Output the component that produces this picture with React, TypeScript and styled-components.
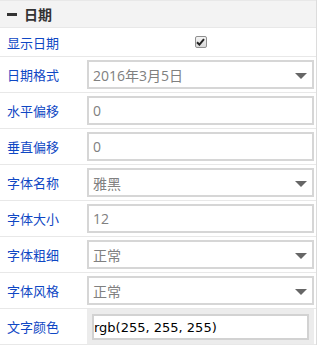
import React from "react";
import styled, { createGlobalStyle } from "styled-components";

const GlobalStyle = createGlobalStyle`
  html, body {
    margin: 0;
    padding: 0;
    background: #ffffff;
  }
  body {
    font-family: "Open Sans", "Noto Sans CJK SC", sans-serif;
  }
`;

const Panel = styled.div`
  width: 316px;
  border-right: 1px solid #dcdcdc;
  background: #fff;
`;

const Header = styled.div`
  height: 26px;
  border-top: 1px solid #e8e8e8;
  border-bottom: 1px solid #e8e8e8;
  background: #f3f3f3;
  display: flex;
  align-items: center;
  gap: 7px;
  padding-left: 7px;
  font-family: "Noto Sans CJK SC", sans-serif;
  font-size: 14px;
  font-weight: 700;
  color: #333;
`;

const Minus = styled.span`
  display: inline-block;
  width: 10px;
  height: 3px;
  background: #333;
`;

const Row = styled.div<{ $tall?: boolean }>`
  display: grid;
  grid-template-columns: 87px 227px;
  align-items: center;
  height: ${(p) => (p.$tall ? 35 : 28)}px;
  border-bottom: 1px solid #e8e8e8;
`;

const Label = styled.div`
  padding-left: 7px;
  font-family: "Noto Sans CJK SC", sans-serif;
  font-size: 13px;
  color: #0f47c4;
`;

const Field = styled.div`
  position: relative;
  box-sizing: border-box;
  height: 29px;
  border: 2px solid #d6d6d6;
  display: flex;
  align-items: center;
  padding-left: 4px;
  font-family: "Open Sans", "Noto Sans CJK SC", sans-serif;
  font-size: 14px;
  color: #808080;
`;

const Arrow = styled.span`
  position: absolute;
  right: 5px;
  top: 11px;
  width: 0;
  height: 0;
  border-left: 6px solid transparent;
  border-right: 6px solid transparent;
  border-top: 6px solid #666;
`;

const CheckCell = styled.div`
  display: flex;
  justify-content: center;
`;

const CheckBox = styled.span`
  box-sizing: border-box;
  width: 12px;
  height: 12px;
  border: 1px solid #8f8f8f;
  border-radius: 2px;
  background: linear-gradient(#f4f4f4, #d8d8d8);
  display: flex;
  align-items: center;
  justify-content: center;
`;

const ColorWrap = styled.div`
  box-sizing: border-box;
  height: 35px;
  background: #ececec;
  padding: 5px;
`;

const ColorInput = styled.div`
  box-sizing: border-box;
  height: 26px;
  border: 2px solid #d2d2d2;
  background: #fff;
  display: flex;
  align-items: center;
  padding-left: 0;
  font-family: "DejaVu Sans", sans-serif;
  font-size: 13px;
  color: #000;
`;

type Item = { label: string; value: string; select?: boolean };

const items: Item[] = [
  { label: "日期格式", value: "2016年3月5日", select: true },
  { label: "水平偏移", value: "0" },
  { label: "垂直偏移", value: "0" },
  { label: "字体名称", value: "雅黑", select: true },
  { label: "字体大小", value: "12" },
  { label: "字体粗细", value: "正常", select: true },
  { label: "字体风格", value: "正常", select: true },
];

export default function App() {
  return (
    <>
      <GlobalStyle />
      <Panel>
        <Header>
          <Minus />
          日期
        </Header>
        <Row>
          <Label>显示日期</Label>
          <CheckCell>
            <CheckBox>
              <svg width="9" height="8" viewBox="0 0 9 8">
                <path d="M1 4.2 L3.4 6.6 L8 1.2" fill="none" stroke="#222" strokeWidth="2" />
              </svg>
            </CheckBox>
          </CheckCell>
        </Row>
        {items.map((it) => (
          <Row $tall key={it.label}>
            <Label>{it.label}</Label>
            <Field>
              {it.value}
              {it.select && <Arrow />}
            </Field>
          </Row>
        ))}
        <Row $tall>
          <Label>文字颜色</Label>
          <ColorWrap>
            <ColorInput>rgb(255, 255, 255)</ColorInput>
          </ColorWrap>
        </Row>
      </Panel>
    </>
  );
}
